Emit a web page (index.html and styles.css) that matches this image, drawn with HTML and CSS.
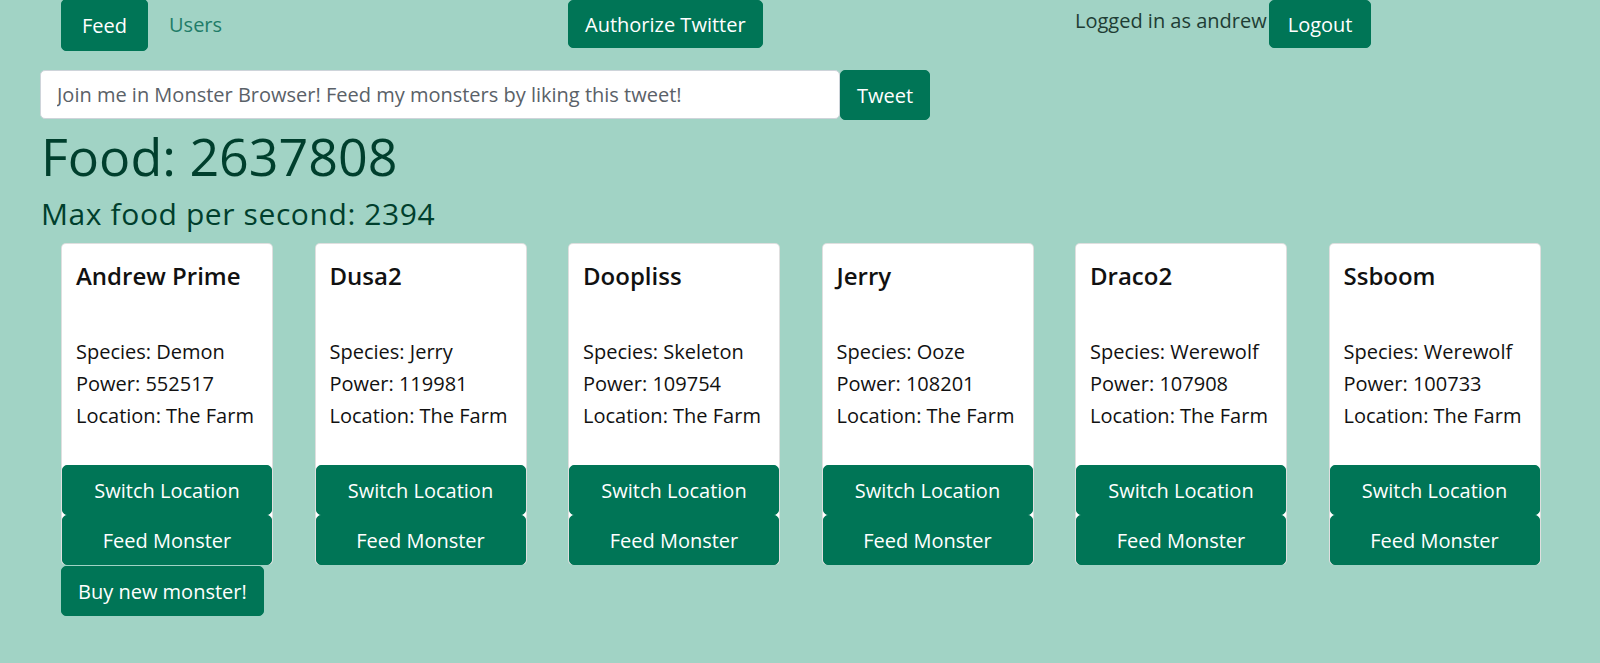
FILE: index.html
```html
<!DOCTYPE html>
<html lang="en">
<head>
<meta charset="utf-8">
<title>Monster Browser</title>
<link rel="stylesheet" href="styles.css">
</head>
<body>
  <header class="topbar">
    <nav class="nav-col">
      <a class="btn btn-nav active">Feed</a>
      <a class="nav-link">Users</a>
    </nav>
    <div class="nav-col">
      <button class="btn btn-lg">Authorize Twitter</button>
    </div>
    <div class="nav-col user-col">
      <span class="logged">Logged in as andrew</span>
      <button class="btn btn-lg btn-logout">Logout</button>
    </div>
  </header>

  <section class="main">
    <div class="tweet-row">
      <input class="tweet-input" type="text" value="Join me in Monster Browser! Feed my monsters by liking this tweet!">
      <button class="btn btn-lg">Tweet</button>
    </div>
    <h1 class="food">Food: 2637808</h1>
    <h3 class="rate">Max food per second: 2394</h3>
  </section>

  <section class="cards">
    <div class="card">
      <div class="card-body">
        <h5 class="card-title">Andrew Prime</h5>
        <div class="card-info">
          <div>Species: Demon</div>
          <div>Power: 552517</div>
          <div>Location: The Farm</div>
        </div>
      </div>
      <button class="btn btn-card">Switch Location</button>
      <button class="btn btn-card">Feed Monster</button>
    </div>
    <div class="card">
      <div class="card-body">
        <h5 class="card-title">Dusa2</h5>
        <div class="card-info">
          <div>Species: Jerry</div>
          <div>Power: 119981</div>
          <div>Location: The Farm</div>
        </div>
      </div>
      <button class="btn btn-card">Switch Location</button>
      <button class="btn btn-card">Feed Monster</button>
    </div>
    <div class="card">
      <div class="card-body">
        <h5 class="card-title">Doopliss</h5>
        <div class="card-info">
          <div>Species: Skeleton</div>
          <div>Power: 109754</div>
          <div>Location: The Farm</div>
        </div>
      </div>
      <button class="btn btn-card">Switch Location</button>
      <button class="btn btn-card">Feed Monster</button>
    </div>
    <div class="card">
      <div class="card-body">
        <h5 class="card-title">Jerry</h5>
        <div class="card-info">
          <div>Species: Ooze</div>
          <div>Power: 108201</div>
          <div>Location: The Farm</div>
        </div>
      </div>
      <button class="btn btn-card">Switch Location</button>
      <button class="btn btn-card">Feed Monster</button>
    </div>
    <div class="card">
      <div class="card-body">
        <h5 class="card-title">Draco2</h5>
        <div class="card-info">
          <div>Species: Werewolf</div>
          <div>Power: 107908</div>
          <div>Location: The Farm</div>
        </div>
      </div>
      <button class="btn btn-card">Switch Location</button>
      <button class="btn btn-card">Feed Monster</button>
    </div>
    <div class="card">
      <div class="card-body">
        <h5 class="card-title">Ssboom</h5>
        <div class="card-info">
          <div>Species: Werewolf</div>
          <div>Power: 100733</div>
          <div>Location: The Farm</div>
        </div>
      </div>
      <button class="btn btn-card">Switch Location</button>
      <button class="btn btn-card">Feed Monster</button>
    </div>
  </section>

  <div class="buy-row">
    <button class="btn btn-lg btn-buy">Buy new monster!</button>
  </div>
</body>
</html>
```

FILE: styles.css
```css
* { box-sizing: border-box; }

html, body {
  margin: 0;
  padding: 0;
}

body {
  background: #a1d3c5;
  font-family: "Open Sans", "Noto Sans", sans-serif;
  color: #212529;
  height: 663px;
  overflow: hidden;
}

.btn {
  display: inline-block;
  font-family: inherit;
  font-size: 20px;
  line-height: 30px;
  color: #fff;
  background: #007556;
  border: 1px solid #007556;
  border-radius: 5px;
  text-align: center;
  cursor: pointer;
  white-space: nowrap;
  margin: 0;
}

.btn-lg {
  padding: 9px 16px 7px;
  height: 48px;
}

/* top navigation */
.topbar {
  display: grid;
  grid-template-columns: repeat(3, 507px);
  padding-left: 61px;
  height: 48px;
}

.nav-col {
  display: flex;
  align-items: flex-start;
}

.btn-nav {
  padding: 11px 20px 9px;
  height: 52px;
  margin-top: -1px;
}

.nav-link {
  font-size: 20px;
  line-height: 30px;
  padding: 11px 21px 9px;
  color: #1f7c68;
  margin-top: -1px;
}

.logged {
  font-size: 20px;
  line-height: 30px;
  color: #1e3d34;
  padding-top: 6px;
}

.btn-logout {
  padding-left: 18px;
  padding-right: 18px;
  margin-left: 2px;
}

/* tweet + food */
.main {
  padding-left: 40px;
}

.tweet-row {
  display: flex;
  margin-top: 22px;
  height: 49px;
}

.tweet-input {
  width: 800px;
  height: 49px;
  font-family: inherit;
  font-size: 20px;
  color: #5a6168;
  background: #fff;
  border: 1px solid #ced4da;
  border-radius: 5px;
  padding: 8px 16px;
  margin: 0;
}

.tweet-row .btn-lg {
  height: 50px;
  padding: 10px 16px 8px;
}

.food {
  margin: 6px 0 0 1px;
  font-size: 52px;
  line-height: 62px;
  font-weight: 400;
  color: #003f2d;
}

.rate {
  margin: 10px 0 0 1px;
  font-size: 30px;
  line-height: 34px;
  font-weight: 400;
  letter-spacing: 0.6px;
  color: #003f2d;
}

/* cards */
.cards {
  display: grid;
  grid-template-columns: repeat(6, 212px);
  column-gap: 41.5px;
  padding-left: 61px;
  margin-top: 12px;
}

.card {
  background: #fff;
  border: 1px solid rgba(0, 0, 0, 0.125);
  border-radius: 5px;
  display: flex;
  flex-direction: column;
  height: 322px;
}

.card-body {
  padding: 17px 14px 33px;
}

.card-title {
  margin: 0;
  font-size: 24px;
  line-height: 29px;
  font-weight: 600;
  color: #111;
}

.card-info {
  margin-top: 46px;
  font-size: 20px;
  line-height: 32px;
  color: #111;
}

.btn-card {
  width: 100%;
  height: 50px;
  padding: 10px 10px 8px;
}

.buy-row {
  padding-left: 61px;
  margin-top: 1px;
}

.btn-buy {
  height: 50px;
  padding: 10px 16px 8px;
}
```
